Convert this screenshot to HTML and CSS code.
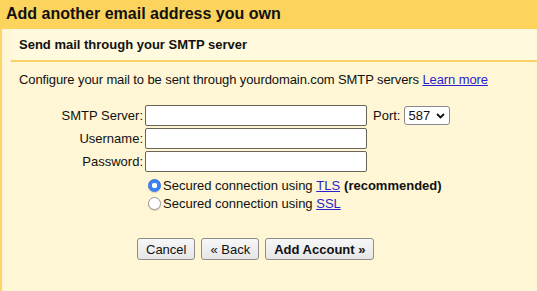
FILE: index.html
```html
<!DOCTYPE html>
<html lang="en">
<head>
  <meta charset="UTF-8" />
  <title>Add another email address you own</title>
  <link rel="stylesheet" href="styles.css">
</head>
<body>
  <div class="title-bar">Add another email address you own</div>

  <div class="panel">
    <div class="sub-title">Send mail through your SMTP server</div>

    <div class="content">
      <p class="intro">Configure your mail to be sent through yourdomain.com SMTP servers <a href="#">Learn more</a></p>

      <div class="form-grid">
        <label class="field-label">SMTP Server:</label>
        <div class="field-row">
          <input class="text-input" type="text" />
          <span class="port-label">Port:</span>
          <div class="select-wrap">
            <select class="port-select">
              <option>587</option>
            </select>
            <svg class="chevron" width="9" height="6" viewBox="0 0 9 6">
              <path d="M1 1 L4.5 4.5 L8 1" fill="none" stroke="#111" stroke-width="1.8" />
            </svg>
          </div>
        </div>

        <label class="field-label">Username:</label>
        <div class="field-row"><input class="text-input" type="text" /></div>

        <label class="field-label">Password:</label>
        <div class="field-row"><input class="text-input" type="password" /></div>

        <div></div>
        <div class="radios">
          <label class="radio-line"><input type="radio" name="sec" checked />Secured connection using <a href="#">TLS</a> <b>(recommended)</b></label>
          <label class="radio-line"><input type="radio" name="sec" />Secured connection using <a href="#">SSL</a></label>
        </div>
      </div>

      <div class="buttons">
        <button class="btn">Cancel</button>
        <button class="btn">&laquo; Back</button>
        <button class="btn btn-main">Add Account &raquo;</button>
      </div>
    </div>
  </div>
</body>
</html>
```

FILE: styles.css
```css
* {
    margin: 0;
    padding: 0;
    box-sizing: border-box;
}

body {
    font-family: "Liberation Sans", Arial, sans-serif;
    font-size: 13px;
    color: #111;
    background-color: #fef6d4;
    height: 100vh;
    overflow: hidden;
}

a {
    color: #2a1fd0;
}

/* Judul kuning */
.title-bar {
    background-color: #fcd35d;
    height: 29px;
    padding: 5px 0 0 6px;
    font-size: 16px;
    font-weight: bold;
    color: #111;
}

.panel {
    border-left: 2px solid #f9d468;
    background-color: #fef6d4;
    height: calc(100vh - 29px);
}

.sub-title {
    background-color: #fff9dd;
    margin-left: 9px;
    padding: 8px 0 0 8px;
    height: 33px;
    border-bottom: 2px solid #f9d166;
    font-weight: bold;
    font-size: 13px;
}

.content {
    padding: 9px 0 0 17px;
}

.intro {
    line-height: 17px;
    letter-spacing: -0.1px;
}

/* Form */
.form-grid {
    display: grid;
    grid-template-columns: 124px auto;
    column-gap: 2px;
    row-gap: 2px;
    margin-top: 17px;
    align-items: center;
}

.field-label {
    text-align: right;
}

.field-row {
    display: flex;
    align-items: center;
}

.text-input {
    width: 222px;
    height: 21px;
    border: 1px solid #6b6557;
    border-radius: 2px;
    background: white;
}

.port-label {
    margin-left: 6px;
    margin-right: 4px;
}

.select-wrap {
    position: relative;
}

.port-select {
    appearance: none;
    -webkit-appearance: none;
    width: 46px;
    height: 19px;
    border: 1px solid #8a8a8a;
    border-radius: 3px;
    background: white;
    font-family: inherit;
    font-size: 13px;
    padding-left: 3px;
    color: #111;
}

.chevron {
    position: absolute;
    right: 5px;
    top: 7px;
    pointer-events: none;
}

.radios {
    margin-top: 2px;
    margin-left: 3px;
}

.radio-line {
    display: flex;
    align-items: center;
    height: 18px;
    white-space: pre;
}

.radio-line a {
    margin: 0 4px 0 0;
}

.radio-line input {
    appearance: none;
    -webkit-appearance: none;
    width: 13px;
    height: 13px;
    border-radius: 50%;
    border: 1px solid #9a9a9a;
    background: white;
    margin-right: 2px;
    box-shadow: 0 1px 1px rgba(0, 0, 0, 0.15);
}

.radio-line input:checked {
    border-color: #2a6fe0;
    background: radial-gradient(circle, white 0, white 2.5px, #3b82f6 3px);
}

/* Tombol */
.buttons {
    display: flex;
    gap: 6px;
    margin-top: 26px;
    margin-left: 118px;
}

.btn {
    height: 22px;
    padding: 0 8px;
    border: 1px solid #8d8d8d;
    border-radius: 3px;
    background: linear-gradient(#f7f7f7, #e6e6e6);
    font-family: inherit;
    font-size: 13px;
    color: #111;
}

.btn-main {
    font-weight: bold;
}
```
